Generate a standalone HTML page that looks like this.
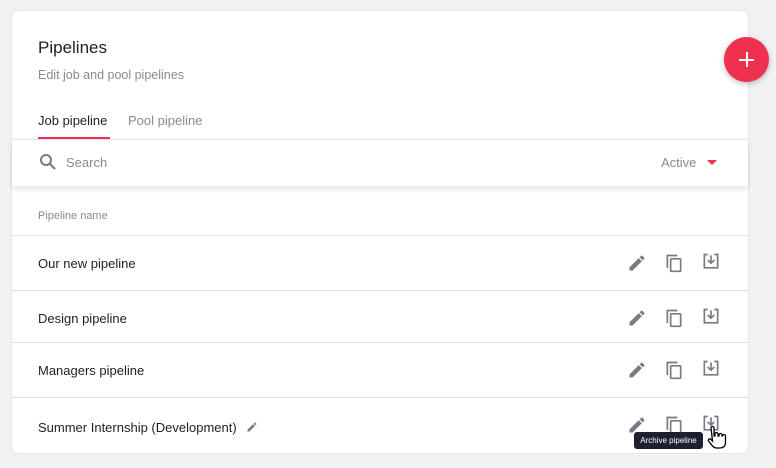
<!DOCTYPE html>
<html><head><style>
body{margin:0;width:776px;height:468px;background:#f2f2f4;font-family:"Liberation Sans",sans-serif;position:relative;overflow:hidden}
.card{position:absolute;left:12px;top:11px;width:736px;height:442px;background:#fff;border-radius:6px;box-shadow:0 0 0 1px #e6e6ea}
.t{position:absolute;white-space:nowrap}
.fab{position:absolute;left:724px;top:37px;width:45px;height:45px;border-radius:50%;background:#f0304f;box-shadow:0 2px 6px rgba(0,0,0,.25)}
.search{position:absolute;left:12px;top:139px;width:736px;height:46px;background:#fff;box-shadow:0 3px 6px rgba(0,0,0,.12);border-top:1px solid #e4e4e8}
.line{position:absolute;left:12px;width:736px;height:1px;background:#e2e2e6}
.row{position:absolute;left:38px;font-size:13px;color:#1e1e2a}
.ic{position:absolute}
</style></head><body>
<div class="card"></div>
<div class="t" style="left:38px;top:38px;font-size:17px;color:#1e1e2a">Pipelines</div>
<div class="t" style="left:38px;top:68px;font-size:12.5px;color:#8a8a94">Edit job and pool pipelines</div>
<div class="t" style="left:38px;top:113px;font-size:13px;color:#1e1e2a">Job pipeline</div>
<div class="t" style="left:128px;top:113px;font-size:13px;color:#8a8a94">Pool pipeline</div>
<div style="position:absolute;left:38px;top:137px;width:72px;height:2px;background:#f0304f"></div>
<div class="fab"><div style="position:absolute;left:15px;top:21.5px;width:15px;height:2px;background:#fff"></div><div style="position:absolute;left:21.5px;top:15px;width:2px;height:15px;background:#fff"></div></div>
<div class="search"></div>
<svg class="ic" style="left:39px;top:153px" width="18" height="18" viewBox="0 0 18 18"><circle cx="7" cy="7" r="5" fill="none" stroke="#7a7a84" stroke-width="2"/><path d="M10.5 10.5L16 16" stroke="#7a7a84" stroke-width="2.2"/></svg>
<div class="t" style="left:66px;top:155px;font-size:13px;color:#8a8a94">Search</div>
<div class="t" style="left:661px;top:155px;font-size:13px;color:#8a8a94">Active</div>
<div style="position:absolute;left:707px;top:160px;border-left:5px solid transparent;border-right:5px solid transparent;border-top:5px solid #f0304f"></div>
<div class="t" style="left:38px;top:210px;font-size:11px;color:#8a8a94">Pipeline name</div>
<div class="line" style="top:235px"></div>
<div class="line" style="top:290px"></div>
<div class="line" style="top:342px"></div>
<div class="line" style="top:397px"></div>
<div class="row" style="top:256px">Our new pipeline</div>
<div class="row" style="top:311px">Design pipeline</div>
<div class="row" style="top:363px">Managers pipeline</div>
<div class="row" style="top:420px">Summer Internship (Development)</div>
<svg class="ic" style="left:246px;top:421px" width="12" height="12" viewBox="0 0 24 24"><path d="M3 17.25V21h3.75L17.81 9.94l-3.75-3.75L3 17.25zM20.71 7.04a1 1 0 000-1.41l-2.34-2.34a1 1 0 00-1.41 0l-1.83 1.83 3.75 3.75 1.83-1.83z" fill="#7a7a84"/></svg>
<svg width="0" height="0" style="position:absolute"><defs>
<g id="p"><path d="M3 17.25V21h3.75L17.81 9.94l-3.75-3.75L3 17.25zM20.71 7.04a1 1 0 000-1.41l-2.34-2.34a1 1 0 00-1.41 0l-1.83 1.83 3.75 3.75 1.83-1.83z" fill="#7a7a84"/></g>
<g id="c" fill="none" stroke="#7a7a84" stroke-width="2"><path d="M4 18V3h12"/><rect x="8" y="7" width="12" height="15" rx="1"/></g>
<g id="d" fill="none" stroke="#7a7a84" stroke-width="2"><path d="M8 3H4v16h16V3h-4"/><path d="M12 4v9M8 9.5l4 4 4-4"/></g>
</defs></svg>
<svg class="ic" style="left:627px;top:253px" width="20" height="20" viewBox="0 0 24 24"><use href="#p"/></svg>
<svg class="ic" style="left:664px;top:253px" width="20" height="20" viewBox="0 0 24 24"><use href="#c"/></svg>
<svg class="ic" style="left:701px;top:252px" width="20" height="20" viewBox="0 0 24 24"><use href="#d"/></svg>
<svg class="ic" style="left:627px;top:308px" width="20" height="20" viewBox="0 0 24 24"><use href="#p"/></svg>
<svg class="ic" style="left:664px;top:308px" width="20" height="20" viewBox="0 0 24 24"><use href="#c"/></svg>
<svg class="ic" style="left:701px;top:307px" width="20" height="20" viewBox="0 0 24 24"><use href="#d"/></svg>
<svg class="ic" style="left:627px;top:360px" width="20" height="20" viewBox="0 0 24 24"><use href="#p"/></svg>
<svg class="ic" style="left:664px;top:360px" width="20" height="20" viewBox="0 0 24 24"><use href="#c"/></svg>
<svg class="ic" style="left:701px;top:359px" width="20" height="20" viewBox="0 0 24 24"><use href="#d"/></svg>
<svg class="ic" style="left:627px;top:415px" width="20" height="20" viewBox="0 0 24 24"><use href="#p"/></svg>
<svg class="ic" style="left:664px;top:415px" width="20" height="20" viewBox="0 0 24 24"><use href="#c"/></svg>
<svg class="ic" style="left:701px;top:414px" width="20" height="20" viewBox="0 0 24 24"><use href="#d"/></svg>
<div style="position:absolute;left:634px;top:432px;width:69px;height:17px;background:#1e2030;border-radius:3px;color:#fff;font-size:8px;line-height:17px;text-align:center">Archive pipeline</div>
<svg class="ic" style="left:705px;top:425px" width="22" height="26" viewBox="0 0 22 26"><path d="M6 3a1.5 1.5 0 013 0v8h1V9a1.5 1.5 0 013 0v2h1v-1a1.5 1.5 0 013 0v1h.5a1.5 1.5 0 013 0v6c0 4-2 6-6 6h-3c-2 0-3-1-4-2l-4-5a1.5 1.5 0 012-2l2 2z" fill="#fff" stroke="#000" stroke-width="1.3"/></svg>
</body></html>
